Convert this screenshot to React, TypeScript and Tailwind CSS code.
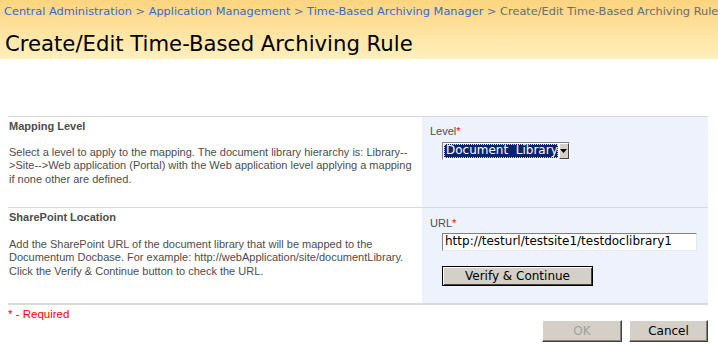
import React from 'react';

const Req = () => <span className="text-[#ff0000]">*</span>;

const Section: React.FC<{
  title: string;
  lines: string[];
  children: React.ReactNode;
  descTop: string;
  h: string;
}> = ({ title, lines, children, descTop, h }) => (
  <div className={`flex border-t border-[#d9d9d9] ${h}`}>
    <div className="w-[414px] pl-[1px] pt-[3px]">
      <div className="font-bold text-[#4d4d4d] leading-[13px]">{title}</div>
      <div className={`${descTop} text-[#4d4d4d] leading-[13.3px]`}>
        {lines.map((l) => (
          <div key={l}>{l}</div>
        ))}
      </div>
    </div>
    <div className="flex-1 bg-[#eef2fd] pl-[8px]">{children}</div>
  </div>
);

export default function App() {
  return (
    <div className="w-[718px] h-[357px] bg-white overflow-hidden text-[11px] font-['DejaVu_Sans',sans-serif]">
      <div className="h-[59px] bg-gradient-to-b from-[#fcd47f] to-[#fff0bc]">
        <div className="h-[22px] pl-[4px] pt-[3px] whitespace-nowrap leading-[16px] text-[11.35px] text-[#3868d4]">
          Central Administration <span className="text-[#5b6a8c]">&gt;</span> Application Management{' '}
          <span className="text-[#5b6a8c]">&gt;</span> Time-Based Archiving Manager{' '}
          <span className="text-[#5b6a8c]">&gt;</span>{' '}
          <span className="text-[#6b6b6b]">Create/Edit Time-Based Archiving Rule</span>
        </div>
        <div className="pl-[5px] pt-[9px] text-[21.2px] leading-[26px] text-black whitespace-nowrap">
          Create/Edit Time-Based Archiving Rule
        </div>
      </div>

      <div className="ml-[8px] w-[700px] mt-[57px] font-['Liberation_Sans',sans-serif]">
        <Section
          title="Mapping Level"
          descTop="mt-[13px]"
          h="h-[91px]"
          lines={[
            'Select a level to apply to the mapping. The document library hierarchy is: Library--',
            '>Site-->Web application (Portal) with the Web application level applying a mapping',
            'if none other are defined.',
          ]}
        >
          <div className="pt-[8px] leading-[13px] text-[#4d4d4d]">
            Level<Req />
          </div>
          <div className="ml-[12px] mt-[4px] flex h-[18px] w-[128px] border border-t-[#808080] border-l-[#808080] border-b-white border-r-white">
            <div className="flex-1 p-[1px] bg-white">
              <div className="h-full bg-[#0a246a] text-white text-[12px] leading-[13px] pl-[2px] outline outline-1 outline-dotted outline-[#e8e0a0] -outline-offset-1 whitespace-nowrap overflow-hidden font-['DejaVu_Sans',sans-serif]">
                Document&nbsp; Library
              </div>
            </div>
            <div className="w-[16px] bg-[#d4d0c8] border border-t-white border-l-white border-b-[#404040] border-r-[#404040] flex items-center justify-center">
              <svg width="7" height="4" viewBox="0 0 7 4">
                <path d="M0 0h7L3.5 4z" fill="#000" />
              </svg>
            </div>
          </div>
        </Section>
        <Section
          title="SharePoint Location"
          descTop="mt-[14px]"
          h="h-[96px]"
          lines={[
            'Add the SharePoint URL of the document library that will be mapped to the',
            'Documentum Docbase. For example: http://webApplication/site/documentLibrary.',
            'Click the Verify & Continue button to check the URL.',
          ]}
        >
          <div className="pt-[9px] leading-[13px] text-[#4d4d4d]">
            URL<Req />
          </div>
          <div className="ml-[12px] mt-[3px] h-[18px] w-[255px] bg-white border border-t-[#808080] border-l-[#808080] border-b-[#e8e8e8] border-r-[#e8e8e8] pl-[2px] text-[12px] leading-[15px] text-black font-['DejaVu_Sans',sans-serif] whitespace-nowrap">
            http://testurl/testsite1/testdoclibrary1
          </div>
          <button className="ml-[12px] mt-[15px] h-[20px] w-[151px] bg-[#d4d0c8] border border-black text-[12px] leading-[16px] text-black font-['DejaVu_Sans',sans-serif] shadow-[inset_1px_1px_0_#fff,inset_-1px_-1px_0_#404040]">
            Verify &amp; Continue
          </button>
        </Section>
        <div className="border-t-2 border-[#dadada] pt-[2px] text-[#ff0000] leading-[14px] text-[11.5px]">
          * - Required
        </div>
        <div className="flex justify-end gap-[7px] -mt-[1px]">
          <button className="h-[22px] w-[80px] bg-[#d4d0c8] text-[#a0a0a0] text-[12px] font-['DejaVu_Sans',sans-serif] border border-t-white border-l-white border-b-[#404040] border-r-[#404040] shadow-[inset_-1px_-1px_0_#808080]">
            OK
          </button>
          <button className="h-[22px] w-[79px] bg-[#d4d0c8] text-black text-[12px] font-['DejaVu_Sans',sans-serif] border border-t-white border-l-white border-b-[#404040] border-r-[#404040] shadow-[inset_-1px_-1px_0_#808080]">
            Cancel
          </button>
        </div>
      </div>
    </div>
  );
}
